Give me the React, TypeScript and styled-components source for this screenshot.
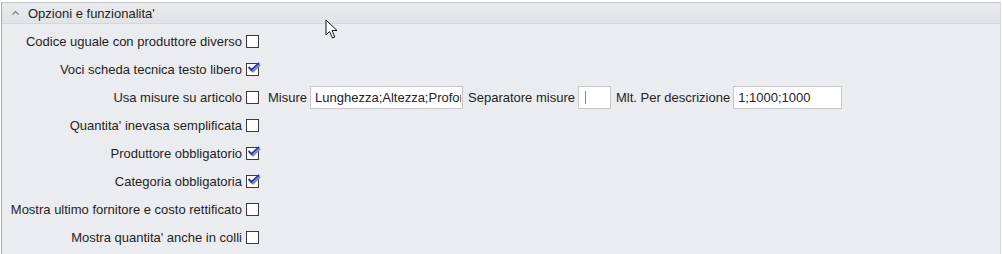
import React from "react";
import styled, { createGlobalStyle } from "styled-components";

const GlobalStyle = createGlobalStyle`
  html, body {
    margin: 0;
    padding: 0;
    background: #ffffff;
  }
  body {
    font-family: "Liberation Sans", Arial, sans-serif;
    font-size: 13px;
    color: #1e1e1e;
  }
`;

interface Option {
  label: string;
  checked: boolean;
  extra?: boolean;
}

const options: Option[] = [
  { label: "Codice uguale con produttore diverso", checked: false },
  { label: "Voci scheda tecnica testo libero", checked: true },
  { label: "Usa misure su articolo", checked: false, extra: true },
  { label: "Quantita' inevasa semplificata", checked: false },
  { label: "Produttore obbligatorio", checked: true },
  { label: "Categoria obbligatoria", checked: true },
  { label: "Mostra ultimo fornitore e costo rettificato", checked: false },
  { label: "Mostra quantita' anche in colli", checked: false },
];

const CheckBox: React.FC<{ checked: boolean }> = ({ checked }) => (
  <Box>
    {checked && (
      <CheckMark width="14" height="12" viewBox="0 0 14 12">
        <path d="M3 6.5 L6 9.5 L13 2.5" fill="none" stroke="#8c8c8c" strokeWidth="2.2" />
        <path d="M1.5 5 L4.5 8 L12 0.8" fill="none" stroke="#2534d0" strokeWidth="1.8" />
      </CheckMark>
    )}
  </Box>
);

const Cursor = () => (
  <CursorWrap>
    <svg width="14" height="21" viewBox="0 0 14 21">
      <path
        d="M1 1 L1 16 L4.5 12.5 L7.5 19 L9.8 18 L7 11.5 L12 11.5 Z"
        fill="#ffffff"
        stroke="#111111"
        strokeWidth="1"
        strokeLinejoin="round"
      />
    </svg>
  </CursorWrap>
);

export default function App() {
  return (
    <>
      <GlobalStyle />
      <Page>
        <Panel>
          <Header>
            <Chevron>
              <svg width="9" height="6" viewBox="0 0 9 6">
                <path d="M1.5 4.5 L4.5 1.5 L7.5 4.5" fill="none" stroke="#7a7a7a" strokeWidth="1.1" />
              </svg>
            </Chevron>
            <Title>Opzioni e funzionalita'</Title>
          </Header>
          <Body>
            {options.map((o) => (
              <React.Fragment key={o.label}>
                <Label>{o.label}</Label>
                <Controls>
                  <CheckBox checked={o.checked} />
                  {o.extra && (
                    <>
                      <FieldLabel $ml={9}>Misure</FieldLabel>
                      <TextBox $w={153}>
                        <Clip>Lunghezza;Altezza;Profondita</Clip>
                      </TextBox>
                      <FieldLabel $ml={5}>Separatore misure</FieldLabel>
                      <TextBox $w={33}>
                        <Caret />
                      </TextBox>
                      <FieldLabel $ml={5}>Mlt. Per descrizione</FieldLabel>
                      <TextBox $w={109}>1;1000;1000</TextBox>
                    </>
                  )}
                </Controls>
              </React.Fragment>
            ))}
          </Body>
          <Cursor />
        </Panel>
      </Page>
    </>
  );
}

const Page = styled.div`
  width: 1002px;
  height: 254px;
  padding-top: 2px;
  box-sizing: border-box;
  background: #ffffff;
`;

const Panel = styled.div`
  position: relative;
  width: 1000px;
  height: 252px;
  margin-left: 1px;
  box-sizing: border-box;
  border-top: 1px solid #c4c5c9;
  border-left: 1px solid #a9aaae;
  border-right: 1px solid #d6d7db;
  background: #ebecf0;
`;

const Header = styled.div`
  height: 20px;
  display: flex;
  align-items: center;
  background: linear-gradient(#e9eaee, #e2e3e7);
  border-bottom: 1px solid #d6d7db;
`;

const Chevron = styled.span`
  width: 24px;
  display: flex;
  justify-content: center;
  padding-left: 1px;
  margin-top: -1px;
`;

const Title = styled.span`
  margin-left: 1px;
  color: #1e1e1e;
`;

const Body = styled.div`
  display: grid;
  grid-template-columns: 240px 1fr;
  grid-auto-rows: 28px;
  padding-top: 3px;
`;

const Label = styled.div`
  display: flex;
  align-items: center;
  justify-content: flex-end;
  white-space: nowrap;
`;

const Controls = styled.div`
  display: flex;
  align-items: center;
  padding-left: 4px;
`;

const Box = styled.span`
  position: relative;
  width: 13px;
  height: 13px;
  box-sizing: border-box;
  border: 1px solid #3a3a3a;
  background: #ffffff;
  flex-shrink: 0;
`;

const CheckMark = styled.svg`
  position: absolute;
  left: 0;
  top: -2px;
  overflow: visible;
`;

const FieldLabel = styled.span<{ $ml: number }>`
  margin-left: ${({ $ml }) => $ml}px;
  margin-right: 3px;
  white-space: nowrap;
`;

const TextBox = styled.div<{ $w: number }>`
  width: ${({ $w }) => $w}px;
  height: 23px;
  flex-shrink: 0;
  box-sizing: border-box;
  border: 1px solid #c6c7cb;
  background: #ffffff;
  display: flex;
  align-items: center;
  padding-left: 4px;
  color: #222233;
  overflow: hidden;
  white-space: nowrap;
`;

const Clip = styled.span`
  overflow: hidden;
  white-space: nowrap;
  width: 146px;
`;

const Caret = styled.span`
  width: 1px;
  height: 13px;
  margin-left: 2px;
  background: #b37a3c;
`;

const CursorWrap = styled.div`
  position: absolute;
  left: 323px;
  top: 16px;
  line-height: 0;
`;
